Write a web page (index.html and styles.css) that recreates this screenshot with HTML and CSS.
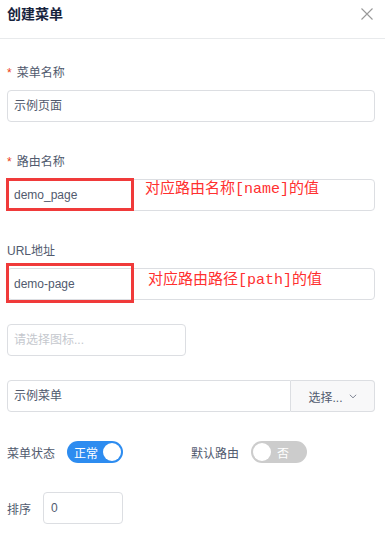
FILE: index.html
```html
<!DOCTYPE html>
<html lang="zh-CN">
<head>
    <meta charset="UTF-8">
    <title>创建菜单</title>
    <link rel="stylesheet" href="styles.css">
</head>
<body>
    <div class="modal">
        <div class="modal-header">
            <span class="modal-title">创建菜单</span>
            <span class="modal-close">
                <svg width="12" height="12" viewBox="0 0 12 12"><path d="M0.5 0.5 L11.5 11.5 M11.5 0.5 L0.5 11.5" stroke="#999" stroke-width="1.1" fill="none"/></svg>
            </span>
        </div>
        <form class="form">
            <div class="form-item">
                <label class="form-label required">菜单名称</label>
                <div class="input">示例页面</div>
            </div>
            <div class="form-item">
                <label class="form-label required">路由名称</label>
                <div class="field">
                    <div class="input">demo_page</div>
                    <div class="mark mark-name"></div>
                    <div class="note note-name">对应路由名称<span class="mono">[name]</span>的值</div>
                </div>
            </div>
            <div class="form-item">
                <label class="form-label">URL地址</label>
                <div class="field">
                    <div class="input">demo-page</div>
                    <div class="mark mark-path"></div>
                    <div class="note note-path">对应路由路径<span class="mono">[path]</span>的值</div>
                </div>
            </div>
            <div class="form-item">
                <div class="input input-icon placeholder">请选择图标...</div>
            </div>
            <div class="form-item">
                <div class="input-group">
                    <div class="input">示例菜单</div>
                    <div class="append">选择...
                        <svg width="8" height="5" viewBox="0 0 8 5"><path d="M0.8 0.8 L4 3.8 L7.2 0.8" stroke="#808695" stroke-width="1" fill="none"/></svg>
                    </div>
                </div>
            </div>
            <div class="form-item form-row">
                <div class="inline">
                    <span class="inline-label">菜单状态</span>
                    <span class="switch on"><span class="switch-text">正常</span><span class="knob"></span></span>
                </div>
                <div class="inline">
                    <span class="inline-label">默认路由</span>
                    <span class="switch off"><span class="knob"></span><span class="switch-text">否</span></span>
                </div>
            </div>
            <div class="form-item">
                <div class="inline">
                    <span class="inline-label">排序</span>
                    <div class="input input-sort">0</div>
                </div>
            </div>
        </form>
    </div>
</body>
</html>
```

FILE: styles.css
```css
body {
    margin: 0;
    background: #fff;
    font-family: "Liberation Sans", "Noto Sans CJK SC", sans-serif;
    font-size: 12px;
    color: #515a6e;
}

.modal {
    width: 385px;
}

.modal-header {
    height: 39px;
    box-sizing: border-box;
    padding: 4px 12px 0 7px;
    border-bottom: 1px solid #e8eaec;
    display: flex;
    justify-content: space-between;
    align-items: flex-start;
}

.modal-title {
    font-size: 14px;
    line-height: 20px;
    font-weight: bold;
    color: #17233d;
}

.modal-close {
    display: flex;
    padding-top: 4px;
}

.form {
    padding: 18px 10px 0 7px;
}

.form-item {
    margin-bottom: 24px;
}

.form-label {
    display: block;
    padding-top: 6px;
    line-height: 20px;
    margin-bottom: 7px;
    color: #515a6e;
}

.form-label.required::before {
    content: "*";
    color: #ed4014;
    margin-right: 5px;
    font-family: "Liberation Sans", sans-serif;
}

.input {
    height: 32px;
    box-sizing: border-box;
    border: 1px solid #dcdee2;
    border-radius: 4px;
    padding: 0 6px;
    line-height: 30px;
    color: #515a6e;
    background: #fff;
}

.placeholder {
    color: #c5c8ce;
}

.input-icon {
    width: 179px;
}

.field {
    position: relative;
}

.mark {
    position: absolute;
    left: -1px;
    width: 128px;
    box-sizing: border-box;
    border: 3px solid #f03a3a;
}

.mark-name {
    top: -1px;
    height: 33px;
}

.mark-path {
    top: -5px;
    height: 40px;
}

.note {
    position: absolute;
    font-family: "Noto Sans CJK SC", sans-serif;
    font-size: 15px;
    line-height: 18px;
    color: #ff3030;
    white-space: nowrap;
}

.note .mono {
    font-family: "Liberation Mono", monospace;
}

.note-name {
    left: 138px;
    top: -1px;
}

.note-path {
    left: 141px;
    top: 1px;
}

.input-group {
    display: flex;
}

.input-group .input {
    flex: 1;
    border-radius: 4px 0 0 4px;
}

.append {
    width: 84px;
    height: 32px;
    box-sizing: border-box;
    border: 1px solid #dcdee2;
    border-left: none;
    border-radius: 0 4px 4px 0;
    background: #f8f8f9;
    display: flex;
    align-items: center;
    justify-content: center;
    gap: 6px;
    color: #515a6e;
}

.form-row {
    display: grid;
    grid-template-columns: 184px 1fr;
}

.inline {
    display: flex;
    align-items: center;
    height: 32px;
}

.inline-label {
    margin-right: 12px;
    color: #515a6e;
}

.switch {
    width: 56px;
    height: 22px;
    box-sizing: border-box;
    border-radius: 11px;
    padding: 2px;
    display: flex;
    align-items: center;
    color: #fff;
    font-size: 12px;
}

.switch.on {
    background: #2d8cf0;
    justify-content: space-between;
    padding-left: 7px;
}

.switch.off {
    background: #ccc;
    gap: 6px;
}

.knob {
    width: 18px;
    height: 18px;
    border-radius: 50%;
    background: #fff;
}

.input-sort {
    width: 80px;
    padding: 0 7px;
}
```
